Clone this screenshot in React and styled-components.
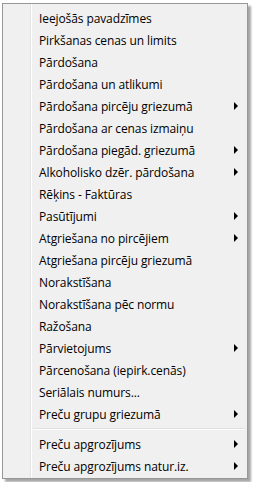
import { createGlobalStyle, styled } from "styled-components";

const GlobalStyle = createGlobalStyle`
	html, body {
		margin: 0;
		padding: 0;
		background: #ffffff;
	}
	body {
		font-family: "Open Sans", "Noto Sans", sans-serif;
	}
`;

const items = [
	{ label: "Ieejošās pavadzīmes" },
	{ label: "Pirkšanas cenas un limits" },
	{ label: "Pārdošana" },
	{ label: "Pārdošana un atlikumi" },
	{ label: "Pārdošana pircēju griezumā", sub: true },
	{ label: "Pārdošana ar cenas izmaiņu" },
	{ label: "Pārdošana piegād. griezumā", sub: true },
	{ label: "Alkoholisko dzēr. pārdošana", sub: true },
	{ label: "Rēķins - Faktūras" },
	{ label: "Pasūtījumi", sub: true },
	{ label: "Atgriešana no pircējiem", sub: true },
	{ label: "Atgriešana pircēju griezumā" },
	{ label: "Norakstīšana" },
	{ label: "Norakstīšana pēc normu" },
	{ label: "Ražošana" },
	{ label: "Pārvietojums", sub: true },
	{ label: "Pārcenošana (iepirk.cenās)" },
	{ label: "Seriālais numurs..." },
	{ label: "Preču grupu griezumā", sub: true },
	{ separator: true },
	{ label: "Preču apgrozījums", sub: true },
	{ label: "Preču apgrozījums natur.iz.", sub: true },
];

const App = () => {
	return (
		<>
			<GlobalStyle />
			<Screen>
				<Menu>
					{items.map((item, i) =>
						item.separator ? (
							<Separator key={i} />
						) : (
							<Item key={i}>
								<Label>{item.label}</Label>
								{item.sub && <Arrow />}
							</Item>
						)
					)}
				</Menu>
			</Screen>
		</>
	);
};

const Screen = styled.div`
	padding: 3px 0 0 2px;
	width: 253px;
	height: 482px;
	box-sizing: border-box;
`;

const Menu = styled.div`
	box-sizing: border-box;
	width: 246px;
	padding: 3px 2px 1px 2px;
	border: 1px solid #979797;
	background: linear-gradient(
		to right,
		#f0f0f0 27px,
		#e2e3e3 27px,
		#e2e3e3 28px,
		#ffffff 28px,
		#ffffff 29px,
		#f0f0f0 29px
	);
	box-shadow: 3px 3px 2px rgba(0, 0, 0, 0.35);
	display: flex;
	flex-direction: column;
`;

const Item = styled.div`
	display: flex;
	align-items: center;
	justify-content: space-between;
	height: 22px;
	padding: 0 7px 0 34px;
`;

const Label = styled.span`
	font-size: 12px;
	color: #000000;
	white-space: nowrap;
	letter-spacing: -0.1px;
`;

const Arrow = styled.span`
	width: 0;
	height: 0;
	border-top: 4px solid transparent;
	border-bottom: 4px solid transparent;
	border-left: 4px solid #000000;
`;

const Separator = styled.div`
	height: 8px;
	margin-left: 28px;
	display: flex;
	align-items: center;

	&::before {
		content: "";
		flex: 1;
		border-top: 1px solid #e0e0e0;
		border-bottom: 1px solid #ffffff;
	}
`;

export default App;
